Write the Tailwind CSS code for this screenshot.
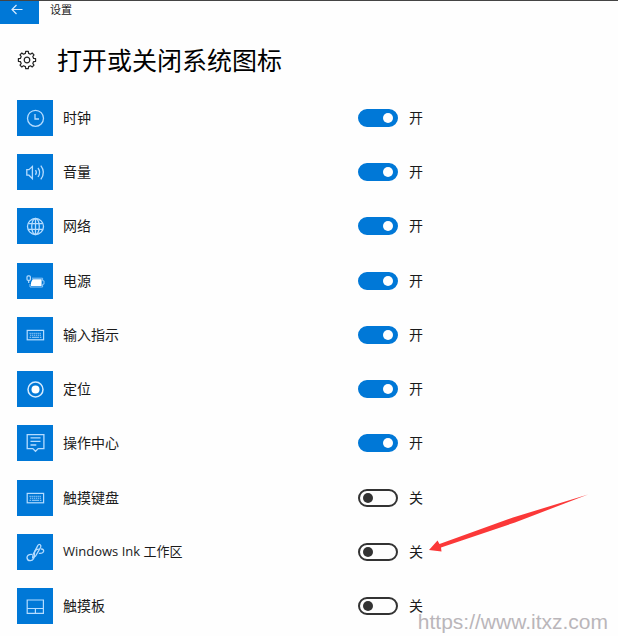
<!DOCTYPE html>
<html lang="zh-CN">
<head>
  <meta charset="UTF-8">
  <meta name="viewport" content="width=device-width, initial-scale=1.0">
  <title>设置</title>
  <script src="https://cdn.jsdelivr.net/npm/@tailwindcss/browser@4"></script>
</head>
<body class="relative min-h-screen flex flex-col bg-[#fefefe] text-[#1a1a1a] font-['Open_Sans','Noto_Sans_CJK_SC',sans-serif]">

  <!-- Title bar -->
  <header class="flex items-start h-6 border-t border-[#444]">
    <button type="button" aria-label="返回" class="w-[39px] h-[23px] bg-[#0078d7]">
      <svg class="block w-[39px] h-[23px]" viewBox="0 0 39 23" fill="none" stroke="#d5ebff" stroke-width="1.2">
        <path d="M22.5 8.5H12M16.5 4L12 8.5L16.5 13"/>
      </svg>
    </button>
    <span class="ml-[11px] text-[11px] leading-[18px]">设置</span>
  </header>

  <main class="flex-1 flex flex-col pl-[17px] pb-3">
    <div class="flex items-center h-[72px] mb-1">
      <svg class="w-5 h-5" viewBox="-10 -10 20 20" fill="none" stroke="#222" stroke-width="1.2" stroke-linejoin="round">
        <path d="M-1.6 -6.6L-1.3 -8.6H1.3L1.6 -6.6L3.5 -5.8L5.2 -7L7 -5.2L5.8 -3.5L6.6 -1.6L8.6 -1.3V1.3L6.6 1.6L5.8 3.5L7 5.2L5.2 7L3.5 5.8L1.6 6.6L1.3 8.6H-1.3L-1.6 6.6L-3.5 5.8L-5.2 7L-7 5.2L-5.8 3.5L-6.6 1.6L-8.6 1.3V-1.3L-6.6 -1.6L-5.8 -3.5L-7 -5.2L-5.2 -7L-3.5 -5.8Z"/>
        <circle r="2.8"/>
      </svg>
      <h1 class="ml-5 text-[25px] leading-9 text-black">打开或关闭系统图标</h1>
    </div>

    <ul class="flex-1 flex flex-col justify-between text-sm">
      <!-- Clock -->
      <li class="grid grid-cols-[341px_1fr] items-center h-9">
        <label for="clock" class="flex items-center gap-[10px]">
          <svg class="w-9 h-9 bg-[#0078d7]" viewBox="0 0 36 36" fill="none" stroke="#b5dcff" stroke-width="1.3">
            <circle cx="18.5" cy="18.3" r="8"/>
            <path d="M18 14V19H22"/>
          </svg>
          时钟
        </label>
        <div class="flex items-center gap-[11px]">
          <input id="clock" type="checkbox" checked class="appearance-none flex items-center w-10 h-[18px] rounded-full border-2 border-[#333] px-[3px] before:w-[10px] before:h-[10px] before:rounded-full before:bg-[#333] checked:justify-end checked:bg-[#0078d7] checked:border-[#0078d7] checked:before:bg-white">
          <span>开</span>
        </div>
      </li>

      <!-- Volume -->
      <li class="grid grid-cols-[341px_1fr] items-center h-9">
        <label for="volume" class="flex items-center gap-[10px]">
          <svg class="w-9 h-9 bg-[#0078d7]" viewBox="0 0 36 36" fill="none" stroke="#b5dcff" stroke-width="1.3">
            <path d="M9.8 15.6H12L15.4 12.4V24.6L12 21.2H9.8Z"/>
            <path d="M18.5 16.2Q20.2 18.4 18.5 20.8M21 14Q24.2 18.4 21 23M23.8 11.6Q29 18.4 23.8 25.4"/>
          </svg>
          音量
        </label>
        <div class="flex items-center gap-[11px]">
          <input id="volume" type="checkbox" checked class="appearance-none flex items-center w-10 h-[18px] rounded-full border-2 border-[#333] px-[3px] before:w-[10px] before:h-[10px] before:rounded-full before:bg-[#333] checked:justify-end checked:bg-[#0078d7] checked:border-[#0078d7] checked:before:bg-white">
          <span>开</span>
        </div>
      </li>

      <!-- Network -->
      <li class="grid grid-cols-[341px_1fr] items-center h-9">
        <label for="network" class="flex items-center gap-[10px]">
          <svg class="w-9 h-9 bg-[#0078d7]" viewBox="0 0 36 36" fill="none" stroke="#b5dcff" stroke-width="1.3">
            <circle cx="18.5" cy="18.5" r="8"/>
            <ellipse cx="18.5" cy="18.5" rx="3.8" ry="8"/>
            <path d="M18.5 10.5V26.5M11.2 15.7H25.8M11.2 21.3H25.8"/>
          </svg>
          网络
        </label>
        <div class="flex items-center gap-[11px]">
          <input id="network" type="checkbox" checked class="appearance-none flex items-center w-10 h-[18px] rounded-full border-2 border-[#333] px-[3px] before:w-[10px] before:h-[10px] before:rounded-full before:bg-[#333] checked:justify-end checked:bg-[#0078d7] checked:border-[#0078d7] checked:before:bg-white">
          <span>开</span>
        </div>
      </li>

      <!-- Power -->
      <li class="grid grid-cols-[341px_1fr] items-center h-9">
        <label for="power" class="flex items-center gap-[10px]">
          <svg class="w-9 h-9 bg-[#0078d7]" viewBox="0 0 36 36" fill="none" stroke="#b5dcff" stroke-width="1.2">
            <rect x="10" y="12.8" width="3.4" height="4.6" rx="1.2"/>
            <path d="M11.7 17.4V20"/>
            <path d="M15 15.2H25.6V17.8H27V21.2H25.6V24H13V21" stroke="#8fc8f8" stroke-width="1"/>
            <path d="M15.6 16.2H24.6V23H14V19.5Z" fill="#fff" stroke="none"/>
          </svg>
          电源
        </label>
        <div class="flex items-center gap-[11px]">
          <input id="power" type="checkbox" checked class="appearance-none flex items-center w-10 h-[18px] rounded-full border-2 border-[#333] px-[3px] before:w-[10px] before:h-[10px] before:rounded-full before:bg-[#333] checked:justify-end checked:bg-[#0078d7] checked:border-[#0078d7] checked:before:bg-white">
          <span>开</span>
        </div>
      </li>

      <!-- Input indicator -->
      <li class="grid grid-cols-[341px_1fr] items-center h-9">
        <label for="input-indicator" class="flex items-center gap-[10px]">
          <svg class="w-9 h-9 bg-[#0078d7]" viewBox="0 0 36 36" fill="none" stroke="#b5dcff" stroke-width="1.2">
            <rect x="10.2" y="13.4" width="16.4" height="9.4"/>
            <path d="M12.5 16.3H24.4M13 18.2H24" stroke-dasharray="1.3 .7" stroke-width=".9"/>
            <path d="M12.5 20.3H14M14.8 20.3H22M22.8 20.3H24.4" stroke-width=".9"/>
          </svg>
          输入指示
        </label>
        <div class="flex items-center gap-[11px]">
          <input id="input-indicator" type="checkbox" checked class="appearance-none flex items-center w-10 h-[18px] rounded-full border-2 border-[#333] px-[3px] before:w-[10px] before:h-[10px] before:rounded-full before:bg-[#333] checked:justify-end checked:bg-[#0078d7] checked:border-[#0078d7] checked:before:bg-white">
          <span>开</span>
        </div>
      </li>

      <!-- Location -->
      <li class="grid grid-cols-[341px_1fr] items-center h-9">
        <label for="location" class="flex items-center gap-[10px]">
          <svg class="w-9 h-9 bg-[#0078d7]" viewBox="0 0 36 36" fill="none" stroke="#d5ebff" stroke-width="1.5">
            <circle cx="18.5" cy="18.5" r="7.5"/>
            <circle cx="18.5" cy="18.5" r="4" fill="#fff" stroke="none"/>
          </svg>
          定位
        </label>
        <div class="flex items-center gap-[11px]">
          <input id="location" type="checkbox" checked class="appearance-none flex items-center w-10 h-[18px] rounded-full border-2 border-[#333] px-[3px] before:w-[10px] before:h-[10px] before:rounded-full before:bg-[#333] checked:justify-end checked:bg-[#0078d7] checked:border-[#0078d7] checked:before:bg-white">
          <span>开</span>
        </div>
      </li>

      <!-- Action center -->
      <li class="grid grid-cols-[341px_1fr] items-center h-9">
        <label for="action-center" class="flex items-center gap-[10px]">
          <svg class="w-9 h-9 bg-[#0078d7]" viewBox="0 0 36 36" fill="none" stroke="#b5dcff" stroke-width="1.3">
            <path d="M10.2 9.6H26.9V23.6H21.2L18.5 26.3L15.8 23.6H10.2Z"/>
            <path d="M13.5 12.8H23.5M13.5 16.4H23.5M13.5 20H19.3"/>
          </svg>
          操作中心
        </label>
        <div class="flex items-center gap-[11px]">
          <input id="action-center" type="checkbox" checked class="appearance-none flex items-center w-10 h-[18px] rounded-full border-2 border-[#333] px-[3px] before:w-[10px] before:h-[10px] before:rounded-full before:bg-[#333] checked:justify-end checked:bg-[#0078d7] checked:border-[#0078d7] checked:before:bg-white">
          <span>开</span>
        </div>
      </li>

      <!-- Touch keyboard -->
      <li class="grid grid-cols-[341px_1fr] items-center h-9">
        <label for="touch-keyboard" class="flex items-center gap-[10px]">
          <svg class="w-9 h-9 bg-[#0078d7]" viewBox="0 0 36 36" fill="none" stroke="#b5dcff" stroke-width="1.2">
            <rect x="10.2" y="13.4" width="16.4" height="9.4"/>
            <path d="M12.5 16.3H24.4M13 18.2H24" stroke-dasharray="1.3 .7" stroke-width=".9"/>
            <path d="M12.5 20.3H14M14.8 20.3H22M22.8 20.3H24.4" stroke-width=".9"/>
          </svg>
          触摸键盘
        </label>
        <div class="flex items-center gap-[11px]">
          <input id="touch-keyboard" type="checkbox" class="appearance-none flex items-center w-10 h-[18px] rounded-full border-2 border-[#333] px-[3px] before:w-[10px] before:h-[10px] before:rounded-full before:bg-[#333] checked:justify-end checked:bg-[#0078d7] checked:border-[#0078d7] checked:before:bg-white">
          <span>关</span>
        </div>
      </li>

      <!-- Windows Ink -->
      <li class="relative grid grid-cols-[341px_1fr] items-center h-9">
        <label for="ink" class="flex items-center gap-[10px] text-[13px]">
          <svg class="w-9 h-9 bg-[#0078d7]" viewBox="0 0 36 36" fill="none" stroke="#b5dcff" stroke-width="1.3" stroke-linecap="round" stroke-linejoin="round">
            <path d="M14.6 20.4Q10.2 20.2 10 23.6Q10.2 26.8 13.4 26.6Q17.6 26.2 17.4 20.5Q17.2 15.6 21.4 15.2"/>
            <path d="M15.6 24L16 20.6L20.8 11.6Q21.8 9.8 23.2 10.8Q24.4 11.8 23.6 13.4L18.6 22Z"/>
            <path d="M24.4 15Q27 15.4 26.6 17.4Q26 19.6 22.4 19.4"/>
          </svg>
          Windows Ink 工作区
        </label>
        <div class="flex items-center gap-[11px]">
          <input id="ink" type="checkbox" class="appearance-none flex items-center w-10 h-[18px] rounded-full border-2 border-[#333] px-[3px] before:w-[10px] before:h-[10px] before:rounded-full before:bg-[#333] checked:justify-end checked:bg-[#0078d7] checked:border-[#0078d7] checked:before:bg-white">
          <span>关</span>
        </div>
        <!-- Arrow pointing at the switch -->
        <svg class="absolute left-[411px] bottom-4 w-[162px] h-[60px]" viewBox="0 0 162 60" fill="#fb3838">
          <path d="M1 56L9.5 46.5L11.5 50L85 23.5L160 .5L87 28.5L13 53.5L13.5 57.5Z"/>
        </svg>
      </li>

      <!-- Touchpad -->
      <li class="grid grid-cols-[341px_1fr] items-center h-9">
        <label for="touchpad" class="flex items-center gap-[10px]">
          <svg class="w-9 h-9 bg-[#0078d7]" viewBox="0 0 36 36" fill="none" stroke="#b5dcff" stroke-width="1.2">
            <path d="M10.2 12H26.4V25.4H10.2ZM10.2 20.5H26.4M18.4 20.5V25.4"/>
          </svg>
          触摸板
        </label>
        <div class="flex items-center gap-[11px]">
          <input id="touchpad" type="checkbox" class="appearance-none flex items-center w-10 h-[18px] rounded-full border-2 border-[#333] px-[3px] before:w-[10px] before:h-[10px] before:rounded-full before:bg-[#333] checked:justify-end checked:bg-[#0078d7] checked:border-[#0078d7] checked:before:bg-white">
          <span>关</span>
        </div>
      </li>
    </ul>
  </main>

  <!-- Watermark -->
  <p class="absolute right-[10px] bottom-0 text-[21px] leading-7 text-[#bab6ba] font-['Liberation_Sans',sans-serif]">https://www.itxz.com</p>

</body>
</html>
